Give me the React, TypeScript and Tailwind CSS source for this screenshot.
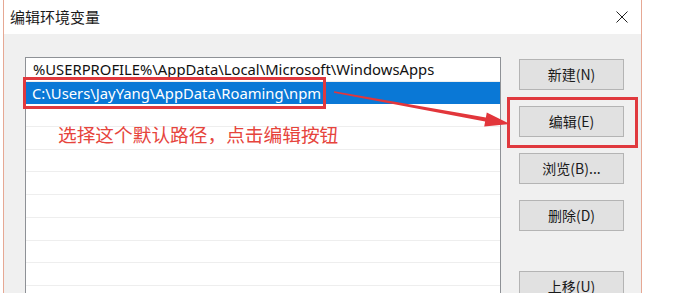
const rows = Array.from({ length: 10 });

const buttons = [
  { label: "新建(N)", mt: "mt-[2px]" },
  { label: "编辑(E)", mt: "mt-[16px]" },
  { label: "浏览(B)...", mt: "mt-[16px]" },
  { label: "删除(D)", mt: "mt-[16px]" },
  { label: "上移(U)", mt: "mt-[40px]" },
];

export default function App() {
  return (
    <div className="relative h-[293px] w-[680px] overflow-hidden bg-white font-['Noto_Sans','Noto_Sans_CJK_SC',sans-serif]">
      {/* dialog window */}
      <div className="ml-[3px] flex h-full w-[639px] flex-col border-x border-[#e6a894]">
        <div className="flex h-[34px] shrink-0 items-center justify-between bg-white pl-[6px] pr-[13px]">
          <span className="text-[15px] text-[#1b1b1b] font-['Noto_Sans_CJK_SC',sans-serif]">编辑环境变量</span>
          <svg width="12" height="12" viewBox="0 0 12 12" className="text-[#222]">
            <path d="M0.5 0.5 L11.5 11.5 M11.5 0.5 L0.5 11.5" stroke="currentColor" strokeWidth="1" />
          </svg>
        </div>

        <div className="flex flex-1 bg-[#f0f0f0] pl-[21px] pt-[23px]">
          <div className="h-[260px] w-[476px] border border-[#8e9196] bg-white pt-[1px]">
            {rows.map((_, i) => (
              <div
                key={i}
                className={
                  i === 1
                    ? "flex h-[22.7px] items-center bg-[#0a78d6] pl-[6px] text-[14.8px] leading-none text-white"
                    : "flex h-[22.7px] items-center border-b border-[#eeeeee] pl-[7px] text-[14.8px] leading-none text-[#111]"
                }
              >
                {i === 0 && "%USERPROFILE%\\AppData\\Local\\Microsoft\\WindowsApps"}
                {i === 1 && "C:\\Users\\JayYang\\AppData\\Roaming\\npm"}
              </div>
            ))}
          </div>

          <div className="ml-[18px] flex flex-col">
            {buttons.map((b) => (
              <button
                key={b.label}
                className={`${b.mt} flex h-[31px] w-[105px] shrink-0 items-center justify-center border border-[#b4b4b4] bg-[#e1e1e1] text-[14px] text-[#1a1a1a] font-['Noto_Sans_CJK_SC',sans-serif]`}
              >
                {b.label}
              </button>
            ))}
          </div>
        </div>
      </div>

      {/* annotations */}
      <div className="absolute left-[23px] top-[77px] h-[32px] w-[303px] border-[3px] border-[#e0393e]" />
      <div className="absolute left-[507px] top-[97px] h-[51px] w-[131px] border-[3px] border-[#e0393e]" />
      <span className="absolute left-[58px] top-[122px] text-[18.7px] leading-[24px] text-[#e6443c] font-['Noto_Sans_CJK_SC',sans-serif]">
        选择这个默认路径，点击编辑按钮
      </span>
      <svg className="absolute left-0 top-0" width="680" height="293" viewBox="0 0 680 293">
        <polygon
          points="334.14,91.26 485.87,117.53 486.78,112.62 510,124 484.22,126.38 485.13,121.47 333.86,92.74"
          fill="#e2363b"
        />
      </svg>
    </div>
  );
}
